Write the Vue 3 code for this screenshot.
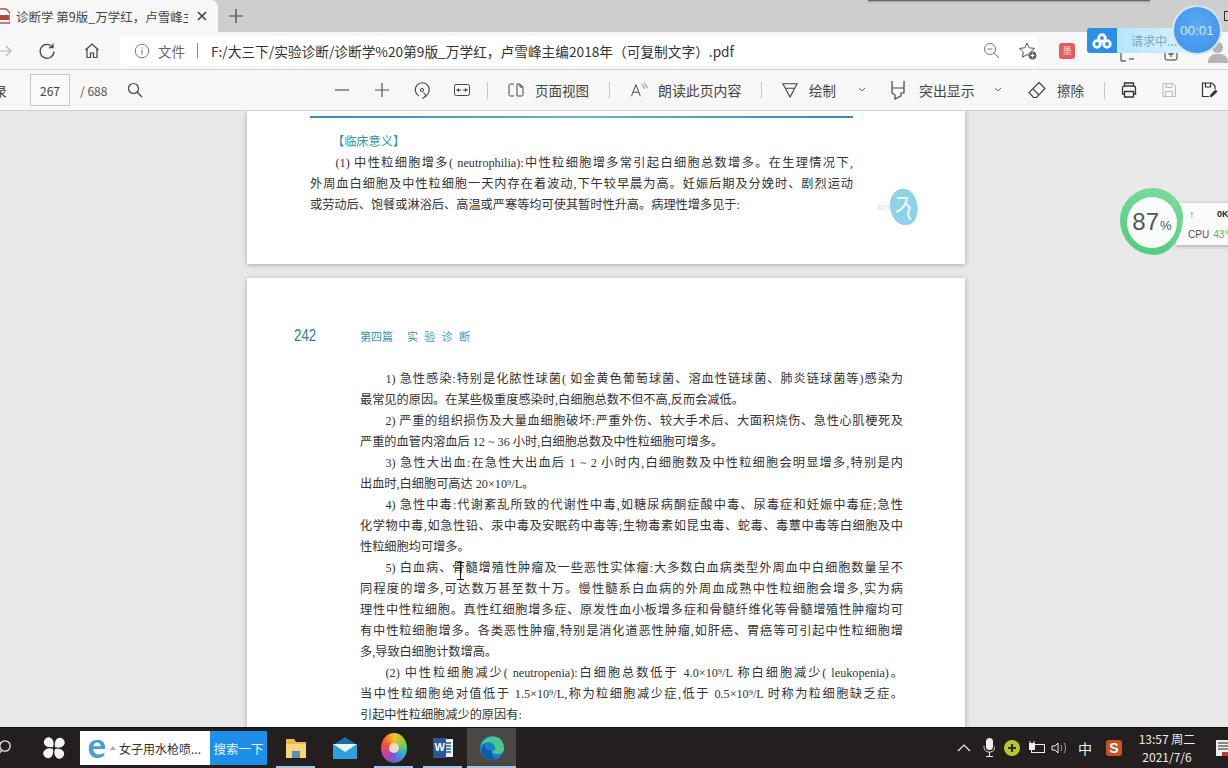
<script setup>
const firstLines = [
  { t: '【临床意义】', c: 'heading' },
  { t: '(1) 中性粒细胞增多( neutrophilia):中性粒细胞增多常引起白细胞总数增多。在生理情况下,', c: 'indent' },
  { t: '外周血白细胞及中性粒细胞一天内存在着波动,下午较早晨为高。妊娠后期及分娩时、剧烈运动', c: '' },
  { t: '或劳动后、饱餐或淋浴后、高温或严寒等均可使其暂时性升高。病理性增多见于:', c: 'last' }
]
const bookLines = [
  { t: '1) 急性感染:特别是化脓性球菌( 如金黄色葡萄球菌、溶血性链球菌、肺炎链球菌等)感染为', c: 'indent' },
  { t: '最常见的原因。在某些极重度感染时,白细胞总数不但不高,反而会减低。', c: 'last' },
  { t: '2) 严重的组织损伤及大量血细胞破坏:严重外伤、较大手术后、大面积烧伤、急性心肌梗死及', c: 'indent' },
  { t: '严重的血管内溶血后 12 ~ 36 小时,白细胞总数及中性粒细胞可增多。', c: 'last' },
  { t: '3) 急性大出血:在急性大出血后 1 ~ 2 小时内,白细胞数及中性粒细胞会明显增多,特别是内', c: 'indent' },
  { t: '出血时,白细胞可高达 20×10⁹/L。', c: 'last' },
  { t: '4) 急性中毒:代谢紊乱所致的代谢性中毒,如糖尿病酮症酸中毒、尿毒症和妊娠中毒症;急性', c: 'indent' },
  { t: '化学物中毒,如急性铅、汞中毒及安眠药中毒等;生物毒素如昆虫毒、蛇毒、毒蕈中毒等白细胞及中', c: '' },
  { t: '性粒细胞均可增多。', c: 'last' },
  { t: '5) 白血病、骨髓增殖性肿瘤及一些恶性实体瘤:大多数白血病类型外周血中白细胞数量呈不', c: 'indent' },
  { t: '同程度的增多,可达数万甚至数十万。慢性髓系白血病的外周血成熟中性粒细胞会增多,实为病', c: '' },
  { t: '理性中性粒细胞。真性红细胞增多症、原发性血小板增多症和骨髓纤维化等骨髓增殖性肿瘤均可', c: '' },
  { t: '有中性粒细胞增多。各类恶性肿瘤,特别是消化道恶性肿瘤,如肝癌、胃癌等可引起中性粒细胞增', c: '' },
  { t: '多,导致白细胞计数增高。', c: 'last' },
  { t: '(2) 中性粒细胞减少( neutropenia):白细胞总数低于 4.0×10⁹/L 称白细胞减少( leukopenia)。', c: 'indent' },
  { t: '当中性粒细胞绝对值低于 1.5×10⁹/L,称为粒细胞减少症,低于 0.5×10⁹/L 时称为粒细胞缺乏症。', c: '' },
  { t: '引起中性粒细胞减少的原因有:', c: 'last' }
]
</script>

<template>
  <div class="screen">
    <header class="tabstrip">
      <div class="tab">
        <svg class="pdf-icon" width="10" height="16" viewBox="0 0 10 16"><path d="M-4 1h10l4 4v10H-4z" fill="#fff" stroke="#b9534c" stroke-width="1.4"/><rect x="-3" y="7" width="12" height="5" fill="#b5443c"/></svg>
        <span class="tab-title">诊断学 第9版_万学红，卢雪峰主</span>
        <svg class="tab-close" width="10" height="10" viewBox="0 0 10 10"><path d="M1 1l8 8M9 1l-8 8" stroke="#333" stroke-width="1.4"/></svg>
      </div>
      <svg class="new-tab" width="16" height="16" viewBox="0 0 16 16"><path d="M8 1v14M1 8h14" stroke="#444" stroke-width="1.2"/></svg>
      <div class="strip-shadow"></div>
      <i class="win-btn"></i>
    </header>

    <div class="navbar">
      <svg class="nav-back" width="14" height="14" viewBox="0 0 14 14"><path d="M0 7h12M7 2l5 5-5 5" fill="none" stroke="#b5b5b5" stroke-width="1.2"/></svg>
      <svg class="nav-reload" width="18" height="18" viewBox="0 0 18 18"><path d="M14.5 5A7 7 0 1 0 16 9.500" fill="none" stroke="#444" stroke-width="1.3"/><path d="M15 1.500V5.500H11" fill="none" stroke="#444" stroke-width="1.3"/></svg>
      <svg class="nav-home" width="18" height="18" viewBox="0 0 18 18"><path d="M2.500 8L9 2l6.500 6M4 7v8.500h3.500V11h3v4.500H14V7" fill="none" stroke="#444" stroke-width="1.2"/></svg>
      <div class="address">
        <svg class="info" width="16" height="16" viewBox="0 0 16 16"><circle cx="8" cy="8" r="6.800" fill="none" stroke="#777" stroke-width="1"/><path d="M8 7v4.500M8 4.500v1.200" stroke="#777" stroke-width="1.100"/></svg>
        <span class="file-label">文件</span>
        <i class="addr-sep"></i>
        <span class="url">F:/大三下/实验诊断/诊断学%20第9版_万学红，卢雪峰主编2018年（可复制文字）.pdf</span>
        <svg class="zoom-out" width="17" height="17" viewBox="0 0 17 17"><circle cx="7" cy="7" r="5.500" fill="none" stroke="#777"/><path d="M4.500 7h5M11 11l5 5" stroke="#777"/></svg>
        <svg class="fav" width="20" height="20" viewBox="0 0 20 20"><path d="M9 2l2.200 4.800 5.300.6-3.900 3.600 1 5.200L9 13.600l-4.600 2.600 1-5.200L1.500 7.400l5.300-.6z" fill="none" stroke="#555"/><circle cx="14.500" cy="14.500" r="4" fill="#666"/><path d="M14.500 12.500v4M12.500 14.500h4" stroke="#fff"/></svg>
      </div>
      <div class="ext-red"><b>墨</b></div>
      <svg class="ext-one" width="14" height="14" viewBox="0 0 14 14"><path d="M1 2v11h5M9 11h5" fill="none" stroke="#333"/></svg>
      <svg class="ext-two" width="16" height="16" viewBox="0 0 16 16"><rect x="2" y="1" width="12" height="13" rx="2" fill="none" stroke="#333"/><path d="M8 5v6M5 8h6" stroke="#333"/></svg>
      <div class="avatar"><i></i><u></u></div>
    </div>

    <div class="pdfbar">
      <span class="cut-label">录</span>
      <span class="page-box">267</span>
      <span class="page-total">/ 688</span>
      <svg class="i-search" width="16" height="16" viewBox="0 0 16 16"><circle cx="6.500" cy="6.500" r="5" fill="none" stroke="#444" stroke-width="1.200"/><path d="M10 10l5 5" stroke="#444" stroke-width="1.200"/></svg>
      <svg class="i-minus" width="20" height="20" viewBox="0 0 20 20"><path d="M3 10h14" stroke="#555" stroke-width="1.200"/></svg>
      <svg class="i-plain" width="20" height="20" viewBox="0 0 20 20"><path d="M3 10h14M10 3v14" stroke="#555" stroke-width="1.200"/></svg>
      <svg class="i-plain" width="20" height="20" viewBox="0 0 20 20"><path d="M7 16A7 7 0 1 1 13.500 16" fill="none" stroke="#444" stroke-width="1.100"/><path d="M10.500 18.500l3.500-2.500-2.500-3.500" fill="none" stroke="#444" stroke-width="1.100"/><circle cx="10" cy="10" r="1.600" fill="none" stroke="#444"/></svg>
      <svg class="i-plain" width="20" height="20" viewBox="0 0 20 20"><rect x="2.500" y="4.500" width="15" height="11" rx="2" fill="none" stroke="#444"/><path d="M4.500 10h4.500M15.500 10h-4.500" stroke="#444"/><path d="M4.500 10l2.500-2v4zM15.500 10l-2.500-2v4z" fill="#444"/></svg>
      <i class="bar-sep sep-a"></i>
      <svg class="i-view" width="18" height="18" viewBox="0 0 18 18"><path d="M7 3H3.500A1.500 1.500 0 0 0 2 4.500v9A1.500 1.500 0 0 0 3.500 15H7M10 3h3l3 3v7.500a1.500 1.500 0 0 1-1.500 1.500H10zM13 3v3h3" fill="none" stroke="#444"/></svg>
      <span class="bar-text t-view">页面视图</span>
      <i class="bar-sep sep-b"></i>
      <svg class="i-read" width="18" height="16" viewBox="0 0 20 18"><path d="M1.500 16L6.500 3l5 13M3.500 11.500h6" fill="none" stroke="#444" stroke-width="1.100"/><path d="M13 2.500c2 1 3 3 3 5M15.500 1c2.500 1.500 3.500 4 3.500 6" fill="none" stroke="#555" stroke-width=".9"/></svg>
      <span class="bar-text t-read">朗读此页内容</span>
      <i class="bar-sep sep-c"></i>
      <svg class="i-draw" width="16" height="20" viewBox="0 0 18 20"><path d="M1 3h16L9 18zM4.500 8h9" fill="none" stroke="#444" stroke-width="1.200"/></svg>
      <span class="bar-text t-draw">绘制</span>
      <svg class="i-chev chev-a" width="8" height="6" viewBox="0 0 8 6"><path d="M1 1l3 3 3-3" fill="none" stroke="#666"/></svg>
      <svg class="i-mark" width="16" height="20" viewBox="0 0 16 20"><path d="M2 1v7h12V1M2 8v5l3 2v4l6-3v-3l3-0V8" fill="none" stroke="#444" stroke-width="1.200"/></svg>
      <span class="bar-text t-mark">突出显示</span>
      <svg class="i-chev chev-b" width="8" height="6" viewBox="0 0 8 6"><path d="M1 1l3 3 3-3" fill="none" stroke="#666"/></svg>
      <svg class="i-erase" width="18" height="18" viewBox="0 0 18 18"><path d="M11 1.500l6 6-8.500 9H5.500L1 11.500zM5 8l6 6" fill="none" stroke="#444" stroke-width="1.200"/></svg>
      <span class="bar-text t-erase">擦除</span>
      <i class="bar-sep sep-d"></i>
      <svg class="i-print" width="18" height="18" viewBox="0 0 18 18"><path d="M4.500 5V2h9v3M4.500 13H2.500V7a2 2 0 0 1 2-2h9a2 2 0 0 1 2 2v6h-2M4.500 10.500h9V16h-9z" fill="none" stroke="#333" stroke-width="1.300"/></svg>
      <svg class="i-save" width="16" height="16" viewBox="0 0 16 16"><path d="M2 1.500h10l2.500 2.500v10.500H2zM5 1.500v4h6v-4M4.500 14.500V9.500h7v5" fill="none" stroke="#bbb"/></svg>
      <svg class="i-saveas" width="18" height="18" viewBox="0 0 18 18"><path d="M9 15.500H2.500V2H12l3 3v3M5.500 2v4h5V2" fill="none" stroke="#333" stroke-width="1.200"/><path d="M9.500 16.500l1-3 5-5 2 2-5 5z" fill="#333"/></svg>
    </div>

    <main class="viewer">
      <section class="page page-one">
        <div class="rule"></div>
        <p v-for="(line, i) in firstLines" :key="i" class="line" :class="line.c">{{ line.t }}</p>
        <div class="wit-mark">
          <span>WITC</span>
          <svg width="30" height="38" viewBox="0 0 30 38"><path d="M13 1c8-2 14 5 16 14 2 10-1 21-10 22C10 38 5 31 3 24 0 13 4 3 13 1z" fill="#8ed2e8"/><path d="M9 10h10c-1 7-5 12-11 14M17 14l5 6c-3 5-2 9 1 12" fill="none" stroke="#eaf8fc" stroke-width="2"/></svg>
        </div>
      </section>

      <section class="page page-two">
        <div class="book-head">
          <span class="book-num">242</span>
          <span class="book-title">第四篇</span>
          <span class="book-sub">实验诊断</span>
        </div>
        <p v-for="(line, i) in bookLines" :key="i" class="line" :class="line.c">{{ line.t }}</p>
        <svg class="text-cursor" width="9" height="18" viewBox="0 0 9 18"><path d="M1 .5h7M1 17.500h7M4.500 .5v17" fill="none" stroke="#111"/></svg>
      </section>
    </main>

    <footer class="taskbar">
      <svg class="t-search" width="16" height="16" viewBox="0 0 16 16"><circle cx="5" cy="6" r="5.200" fill="none" stroke="#eee" stroke-width="1.300"/><path d="M1.500 10.500L-2 15" stroke="#eee" stroke-width="1.300"/></svg>
      <svg class="t-wind" width="24" height="24" viewBox="0 0 24 24"><g fill="#f3f3f3"><path d="M11 11C5 12 1 9 2 5c1-4 6-5 8-2 2 2 2 5 1 8z"/><path d="M13 11C12 5 15 1 19 2c4 1 5 6 2 8-2 2-5 2-8 1z"/><path d="M13 13c6-1 10 2 9 6-1 4-6 5-8 2-2-2-2-5-1-8z"/><path d="M11 13c1 6-2 10-6 9-4-1-5-6-2-8 2-2 5-2 8-1z"/></g></svg>
      <div class="searchbox">
        <div class="search-field">
          <svg width="22" height="24" viewBox="0 0 24 26"><path d="M3 13c0-6 5-9 10-9 6 0 8 5 8 10H8c0 4 3 6 6 6 3 0 5-1 6-2v3c-2 2-4 3-7 3-6 0-10-4-10-11zM8 11h8c0-3-2-4-4-4s-4 2-4 4z" fill="#4a9bd8"/></svg>
          <i class="tri"></i>
          <span>女子用水枪喷...</span>
        </div>
        <div class="search-btn">搜索一下</div>
      </div>
      <div class="app app-on">
        <svg width="24" height="24" viewBox="0 0 24 24"><path d="M2 3h8l2 3h10v16H2z" fill="#e9b949"/><rect x="2" y="8" width="20" height="14" fill="#f6d67a"/><rect x="8" y="15" width="8" height="7" fill="#5f8fa8"/></svg>
      </div>
      <div class="app">
        <svg width="24" height="22" viewBox="0 0 24 22"><path d="M12 0l12 8H0z" fill="#1b6fa8"/><rect y="7" width="24" height="15" fill="#2aa0dc"/><path d="M0 7l12 8 12-8" fill="#e8f4fb"/></svg>
      </div>
      <div class="app app-on"><i class="wheel"></i></div>
      <div class="app app-on">
        <svg width="24" height="24" viewBox="0 0 24 24"><rect x="8" y="3" width="14" height="18" fill="#e8eef5"/><path d="M15 7h5M15 10h5M15 13h5M15 16h5" stroke="#2b579a" stroke-width="1.300"/><rect x="2" y="2" width="13" height="20" fill="#2b579a"/><text x="3.500" y="15" class="word-w">W</text></svg>
      </div>
      <div class="app app-on app-active">
        <svg width="26" height="26" viewBox="0 0 26 26"><circle cx="13" cy="13" r="12" fill="#1b82c9"/><path d="M2 11C4 3 12 0 18 2c5 2 7 7 7 12 0 3-3 5-6 5-4 0-6-1-6-3 2 0 4-1 3-4-1-4-6-6-10-4-2 1-3 2-4 3z" fill="#49c78d"/><path d="M13 16c-1 3 1 7 5 8-5 2-12 1-15-6-1-3 0-7 3-9-1 3 1 6 7 7z" fill="#0f5aa8"/></svg>
      </div>
      <div class="tray">
        <svg class="tr-chev" width="14" height="8" viewBox="0 0 14 8"><path d="M1 7l6-6 6 6" fill="none" stroke="#eee" stroke-width="1.200"/></svg>
        <svg class="tr-mic" width="12" height="20" viewBox="0 0 12 20"><rect x="3" y="0" width="7" height="12" rx="3.500" fill="#eee"/><path d="M1 8c0 4 2 6 5.500 6S12 12 12 8M6.500 14v4M3 18.500h7" fill="none" stroke="#eee"/></svg>
        <svg class="tr-plus" width="16" height="16" viewBox="0 0 16 16"><circle cx="8" cy="8" r="8" fill="#b7c92a"/><path d="M8 4v8M4 8h8" stroke="#25331a" stroke-width="2.200"/></svg>
        <svg class="tr-batt" width="18" height="14" viewBox="0 0 18 14"><rect x="4.500" y="3.500" width="13" height="8" fill="none" stroke="#eee"/><rect x="2" y="2" width="6" height="7" fill="#eee"/><path d="M3 0v2M7 0v2" stroke="#eee"/></svg>
        <svg class="tr-vol" width="18" height="14" viewBox="0 0 18 14"><path d="M1 5h3l3-3v10l-3-3H1z" fill="none" stroke="#eee"/><path d="M10 4c1 2 1 4 0 6M13 2c2 3 2 7 0 10" fill="none" stroke="#aaa"/></svg>
        <span class="tr-ime">中</span>
        <div class="tr-sogou">S</div>
        <div class="tr-clock"><span>13:57 周二</span><span>2021/7/6</span></div>
        <svg class="tr-note" width="12" height="16" viewBox="0 0 12 16"><path d="M0 0h12v16H0z" fill="#eee"/><path d="M2 3h10M2 6h10M2 9h10" stroke="#222"/><path d="M6 12h6v4H6z" fill="#c0392b"/></svg>
      </div>
    </footer>

    <div class="cloud">
      <div class="cloud-logo">
        <svg width="20" height="16" viewBox="0 0 20 16"><g fill="none" stroke="#fff" stroke-width="2.800"><circle cx="10" cy="5" r="3.300"/><circle cx="5" cy="11" r="3.300"/><circle cx="15" cy="11" r="3.300"/></g></svg>
      </div>
      <div class="cloud-text">请求中...</div>
    </div>
    <div class="timer">00:01</div>

    <div class="speed-panel">
      <div class="speed-row"><span class="up">↑</span><b>0K</b></div>
      <div class="speed-row cpu"><span>CPU</span><em>43°</em></div>
    </div>
    <div class="ball"><div class="ball-in"><span class="pct">87</span><span class="pct-sign">%</span></div></div>
  </div>
</template>

<style scoped>
.screen { position: relative; width: 1228px; height: 768px; overflow: hidden; display: flex; flex-direction: column; background: #e8e8e8; font-family: "Noto Sans CJK SC", "Noto Sans", sans-serif; color: #444; }
svg { flex: none; display: block; }
p { margin: 0; }
i { display: block; }

.tabstrip { height: 32px; flex: none; display: flex; align-items: center; background: #cecece; position: relative; }
.tab { width: 218px; height: 32px; background: #f7f7f7; border-top-right-radius: 7px; display: flex; align-items: center; }
.tab-title { margin-left: 6px; width: 172px; font-size: 12.500px; white-space: nowrap; overflow: hidden; color: #444; }
.tab-close { margin-left: 9px; }
.new-tab { margin-left: 10px; }
.strip-shadow { position: absolute; left: 868px; top: 0; width: 282px; height: 1px; background: #666; box-shadow: 0 1px 2px #888; }
.win-btn { position: absolute; left: 1224px; top: 11px; width: 8px; height: 8px; border: 1px solid #333; }

.navbar { height: 38px; flex: none; display: flex; align-items: center; background: #f7f7f7; border-bottom: 1px solid #d6d6d6; box-sizing: border-box; }
.nav-back { margin-left: -1px; }
.nav-reload { margin-left: 25px; }
.nav-home { margin-left: 27px; }
.address { margin-left: 19px; width: 927px; height: 30px; background: #fff; border-radius: 4px; display: flex; align-items: center; }
.info { margin-left: 14px; }
.file-label { margin-left: 8px; width: 29px; font-size: 13.500px; color: #666; white-space: nowrap; }
.addr-sep { margin-left: 10px; width: 1px; height: 15px; background: #888; }
.url { margin-left: 13px; width: 770px; font-size: 13.700px; color: #333; white-space: nowrap; }
.zoom-out { margin-left: 2px; }
.fav { margin-left: 18px; }
.ext-red { margin-left: 21px; width: 16px; height: 16px; border-radius: 3px; background: #e25d5d; color: #f8d0d0; font-size: 9px; display: flex; align-items: center; justify-content: center; }
.ext-red b { font-weight: 400; }
.ext-one { margin-left: 45px; margin-top: 8px; }
.ext-two { margin-left: 29px; margin-top: 6px; }
.avatar { margin-left: 29px; width: 20px; height: 24px; position: relative; overflow: hidden; }
.avatar i { position: absolute; left: 4px; top: 3px; width: 11px; height: 11px; border-radius: 50%; background: #b5b5b5; }
.avatar u { position: absolute; left: 0; top: 15px; width: 20px; height: 9px; border-radius: 8px 8px 0 0; background: #b5b5b5; }

.pdfbar { height: 41px; flex: none; display: flex; align-items: center; background: #f7f7f7; border-bottom: 1px solid #cfcfcf; box-sizing: border-box; font-size: 13px; color: #444; }
.cut-label { margin-left: -6px; width: 14px; font-size: 13px; white-space: nowrap; }
.page-box { margin-left: 22px; width: 40px; height: 32px; box-sizing: border-box; border: 1px solid #c8c8c8; background: #fafafa; display: flex; align-items: center; justify-content: center; font-size: 12px; }
.page-total { margin-left: 10px; width: 30px; font-size: 12px; color: #555; white-space: nowrap; }
.i-search { margin-left: 17px; }
.i-minus { margin-left: 189px; }
.i-plain { margin-left: 20px; }
.bar-sep { width: 1px; height: 17px; background: #c9c9c9; }
.bar-text { white-space: nowrap; font-size: 13.500px; color: #444; }
.sep-a { margin-left: 15px; }
.i-view { margin-left: 19px; }
.t-view { margin-left: 10px; width: 59px; }
.sep-b { margin-left: 15px; }
.i-read { margin-left: 20px; }
.t-read { margin-left: 10px; width: 86px; font-size: 13.900px; }
.sep-c { margin-left: 17px; }
.i-draw { margin-left: 20px; }
.t-draw { margin-left: 11px; width: 29px; }
.chev-a { margin-left: 20px; }
.i-mark { margin-left: 24px; }
.t-mark { margin-left: 13px; width: 58px; font-size: 13.900px; }
.chev-b { margin-left: 17px; }
.i-erase { margin-left: 26px; }
.t-erase { margin-left: 11px; width: 29px; }
.sep-d { margin-left: 18px; }
.i-print { margin-left: 15px; }
.i-save { margin-left: 23px; }
.i-saveas { margin-left: 23px; }

.viewer { flex: 1; min-height: 0; overflow: hidden; padding-left: 247px; display: flex; flex-direction: column; gap: 14px; background: #e8e8e8; }
.page { width: 718px; flex: none; background: #fff; position: relative; box-shadow: 0 1px 5px rgba(0,0,0,.28); box-sizing: border-box; }
.page-one { height: 153px; padding: 5px 112px 0 63px; }
.page-two { height: 470px; padding: 48px 62px 0 113px; }
.rule { height: 1.500px; margin-bottom: 14.500px; background: linear-gradient(90deg, #3a8aa6, #6fb4c6 50%, #3a8aa6); }
.line { height: 21px; line-height: 21px; width: 543px; box-sizing: border-box; font-family: "Liberation Serif", "Noto Sans CJK SC", serif; font-size: 12.200px; color: #333; white-space: nowrap; text-align: justify; text-align-last: justify; text-justify: inter-character; }
.line.indent { padding-left: 25.500px; }
.line.last { text-align-last: left; }
.line.heading { padding-left: 22px; color: #2e94b4; text-align-last: left; }

.wit-mark { position: absolute; left: 632px; top: 77px; display: flex; align-items: center; }
.wit-mark span { font-size: 6px; color: #bcdde8; width: 11px; margin-left: -2px; }

.book-head { height: 20px; margin-bottom: 22.500px; display: flex; align-items: center; position: relative; }
.book-num { position: absolute; left: -66px; width: 22px; font-family: "Liberation Sans", sans-serif; font-size: 16px; color: #2f7d9e; transform: scaleX(.83); transform-origin: left center; white-space: nowrap; }
.book-title { font-size: 11px; color: #3e95b6; white-space: nowrap; }
.book-sub { margin-left: 14px; font-size: 11px; letter-spacing: 6.300px; color: #3e95b6; white-space: nowrap; }
.text-cursor { position: absolute; left: 209px; top: 284px; }

.taskbar { height: 41px; flex: none; display: flex; align-items: center; background: #231f1e; border-top: 1px solid #111; box-sizing: border-box; color: #eee; }
.t-search { margin-left: 0; }
.t-wind { margin-left: 26px; }
.searchbox { margin-left: 14px; width: 187px; height: 34px; display: flex; }
.search-field { width: 130px; background: #fff; display: flex; align-items: center; color: #333; font-size: 12px; white-space: nowrap; }
.search-field svg { margin-left: 6px; }
.tri { margin-left: 2px; margin-right: 3px; border-left: 3px solid transparent; border-right: 3px solid transparent; border-bottom: 4px solid #aaa; }
.search-btn { width: 57px; background: #1e8fe8; color: #eaf5ff; display: flex; align-items: center; justify-content: center; font-size: 12.500px; white-space: nowrap; }
.app { width: 49px; height: 40px; display: flex; align-items: center; justify-content: center; position: relative; }
.searchbox + .app { margin-left: 4px; }
.app-on::after { content: ""; position: absolute; left: 5px; right: 5px; bottom: 0; height: 2px; background: #a4c8e4; }
.app-active { background: #4a4745; }
.app-active::after { left: 0; right: 0; }
.wheel { width: 26px; height: 30px; border-radius: 50%; background: conic-gradient(#f6c42c, #8ecb3d, #2eb5c9, #6a5bd6, #d83ca0, #ee5a2d, #f6c42c); position: relative; }
.wheel::after { content: ""; position: absolute; left: 8px; top: 10px; width: 10px; height: 10px; border-radius: 50%; background: #f4d8c8; }
.word-w { fill: #fff; font-family: "Liberation Sans", sans-serif; font-size: 11px; font-weight: 700; }

.tray { margin-left: auto; display: flex; align-items: center; height: 40px; }
.tr-mic { margin-left: 12px; }
.tr-plus { margin-left: 9px; }
.tr-batt { margin-left: 7px; }
.tr-vol { margin-left: 6px; }
.tr-ime { margin-left: 9px; width: 16px; font-size: 14px; }
.tr-sogou { margin-left: 12px; width: 16px; height: 16px; border-radius: 3px; background: #c9512b; color: #fff; font-family: "Liberation Sans", sans-serif; font-weight: 700; font-size: 14px; display: flex; align-items: center; justify-content: center; }
.tr-clock { margin-left: 11px; width: 68px; display: flex; flex-direction: column; align-items: center; font-size: 12px; line-height: 18px; white-space: nowrap; }
.tr-note { margin-left: 15px; }

.cloud { position: absolute; left: 1087px; top: 28px; width: 96px; height: 25px; display: flex; border-radius: 3px; overflow: hidden; }
.cloud-logo { width: 30px; background: #2b8fe8; display: flex; align-items: center; justify-content: center; }
.cloud-text { flex: 1; background: linear-gradient(90deg, #b6e6fa, #d4f0fc); color: #7aa9c8; font-size: 12px; line-height: 25px; padding-left: 14px; white-space: nowrap; }
.timer { position: absolute; left: 1172px; top: 5px; width: 50px; height: 50px; box-sizing: border-box; border: 2px solid #cfe8f7; border-radius: 50%; background: radial-gradient(circle at 50% 40%, #5aaaf5, #3f8ee8); color: #cfe6fb; font-family: "Liberation Sans", sans-serif; font-size: 13.500px; display: flex; align-items: center; justify-content: center; }

.speed-panel { position: absolute; left: 1176px; top: 203px; width: 60px; height: 42px; background: #fafafa; box-shadow: 0 1px 4px rgba(0,0,0,.3); box-sizing: border-box; padding: 1px 0 0 12px; font-size: 10px; font-family: "Liberation Sans", sans-serif; }
.speed-row { height: 20px; display: flex; align-items: center; color: #555; white-space: nowrap; }
.up { color: #4a8cb0; font-size: 11px; width: 28px; margin-left: 1px; }
.speed-row b { font-weight: 700; color: #222; font-size: 9px; }
.cpu em { font-style: normal; color: #4cba72; margin-left: 4px; }
.ball { position: absolute; left: 1120px; top: 188px; box-sizing: border-box; width: 63px; height: 67px; padding: 9px 6px 7px 7px; border-radius: 52% 48% 46% 54% / 48% 44% 56% 52%; background: linear-gradient(200deg, #7fdc9f, #4ccb78); }
.ball-in { width: 50px; height: 51px; border-radius: 50%; background: #f8fbf9; display: flex; align-items: baseline; justify-content: center; line-height: 50px; font-family: "Liberation Sans", sans-serif; color: #555; }
.pct { font-size: 24px; }
.pct-sign { font-size: 13px; margin-left: 1px; }
</style>
